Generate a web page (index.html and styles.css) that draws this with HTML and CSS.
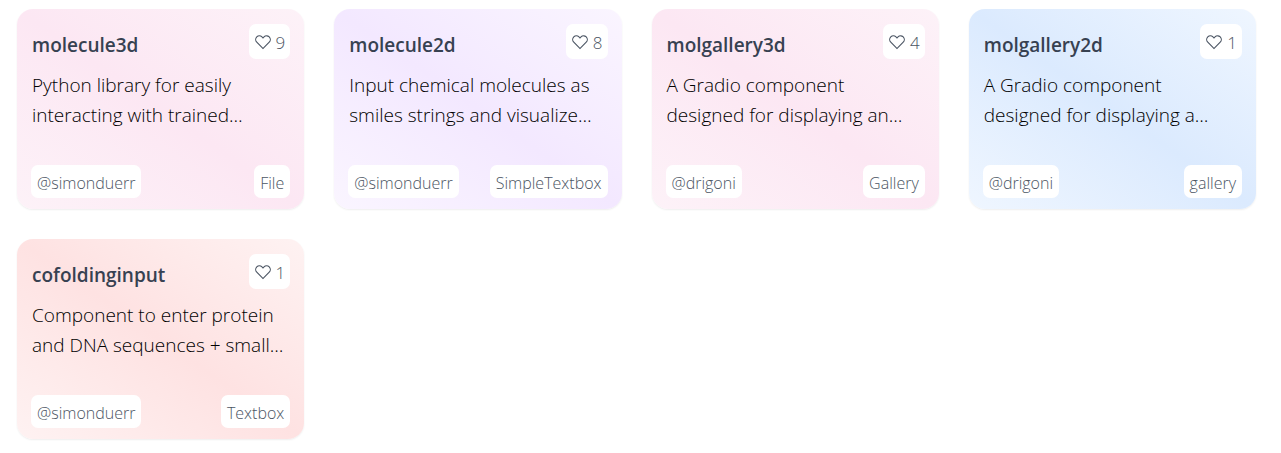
FILE: index.html
```
<!DOCTYPE html>
<html lang="en">
<head>
<meta charset="utf-8">
<meta name="viewport" content="width=device-width, initial-scale=1">
<title>Custom Components</title>
<link rel="stylesheet" href="styles.css">
</head>
<body>
<svg class="sprite" aria-hidden="true">
  <symbol id="heart" viewBox="0 0 32 32">
    <path fill="currentColor" d="M22.45 6a5.47 5.47 0 0 1 3.91 1.64 5.7 5.7 0 0 1 0 8L16 26.13 5.64 15.64a5.7 5.7 0 0 1 0-8 5.48 5.48 0 0 1 7.82 0L16 10.24l2.53-2.58A5.44 5.44 0 0 1 22.45 6m0-2a7.47 7.47 0 0 0-5.34 2.24L16 7.36l-1.11-1.12a7.49 7.49 0 0 0-10.68 0 7.72 7.72 0 0 0 0 10.82L16 29l11.79-11.94a7.72 7.72 0 0 0 0-10.82A7.49 7.49 0 0 0 22.45 4Z"/>
  </symbol>
</svg>
<main class="grid">
  <article class="card pink">
    <header class="top"><h2 class="name">molecule3d</h2><span class="pill likes"><svg class="heart" aria-label="Likes"><use href="#heart"/></svg>9</span></header>
    <p class="description">Python library for easily interacting with trained…</p>
    <footer class="tags"><span class="pill">@simonduerr</span><span class="pill">File</span></footer>
  </article>
  <article class="card purple">
    <header class="top"><h2 class="name">molecule2d</h2><span class="pill likes"><svg class="heart" aria-label="Likes"><use href="#heart"/></svg>8</span></header>
    <p class="description">Input chemical molecules as smiles strings and visualize…</p>
    <footer class="tags"><span class="pill">@simonduerr</span><span class="pill">SimpleTextbox</span></footer>
  </article>
  <article class="card pink">
    <header class="top"><h2 class="name">molgallery3d</h2><span class="pill likes"><svg class="heart" aria-label="Likes"><use href="#heart"/></svg>4</span></header>
    <p class="description">A Gradio component designed for displaying an…</p>
    <footer class="tags"><span class="pill">@drigoni</span><span class="pill">Gallery</span></footer>
  </article>
  <article class="card blue">
    <header class="top"><h2 class="name">molgallery2d</h2><span class="pill likes"><svg class="heart" aria-label="Likes"><use href="#heart"/></svg>1</span></header>
    <p class="description">A Gradio component designed for displaying a…</p>
    <footer class="tags"><span class="pill">@drigoni</span><span class="pill">gallery</span></footer>
  </article>
  <article class="card red">
    <header class="top"><h2 class="name">cofoldinginput</h2><span class="pill likes"><svg class="heart" aria-label="Likes"><use href="#heart"/></svg>1</span></header>
    <p class="description">Component to enter protein and DNA sequences + small…</p>
    <footer class="tags"><span class="pill">@simonduerr</span><span class="pill">Textbox</span></footer>
  </article>
</main>
</body>
</html>
```
FILE: styles.css
```
* {
  box-sizing: border-box;
}

body {
  margin: 0;
  background: #fff;
  color: #000;
  font-family: "Segoe UI", "Open Sans", "Noto Sans", sans-serif;
  font-weight: 300;
}

.sprite {
  display: none;
}

.grid {
  display: grid;
  grid-template-columns: repeat(auto-fill, minmax(260px, 1fr));
  gap: 30px;
  padding: 9px 25px 9px 17px;
}

.card {
  display: flex;
  flex-direction: column;
  min-height: 200px;
  padding: 15px 14px 11px;
  border-radius: 16px;
  background-image: linear-gradient(to top right, var(--light), var(--deep), var(--light));
  box-shadow: 0 1px 2px rgba(0, 0, 0, 0.07);
}

.pink {
  --light: #fdf2f8;
  --deep: #fce7f3;
}

.purple {
  --light: #faf5ff;
  --deep: #f3e8ff;
}

.blue {
  --light: #eff6ff;
  --deep: #dbeafe;
}

.red {
  --light: #fef2f2;
  --deep: #fee2e2;
}

.top,
.tags {
  display: flex;
  justify-content: space-between;
}

.name {
  margin: 0;
  padding: 6px 0 0 1px;
  color: #374151;
  font-size: 19px;
  font-weight: 600;
  line-height: 30px;
}

.pill {
  padding: 7px 6px 3px;
  border-radius: 7px;
  background: #fff;
  color: #4b5563;
  font-size: 16px;
  line-height: 23px;
}

.likes {
  display: flex;
  gap: 4px;
  height: 35px;
  padding: 7px 5px 5px;
  font-size: 17px;
}

.heart {
  width: 18px;
  height: 22px;
}

.description {
  margin: 0 0 auto;
  padding: 10px 0 0 1px;
  font-size: 19px;
  line-height: 30px;
}
```
